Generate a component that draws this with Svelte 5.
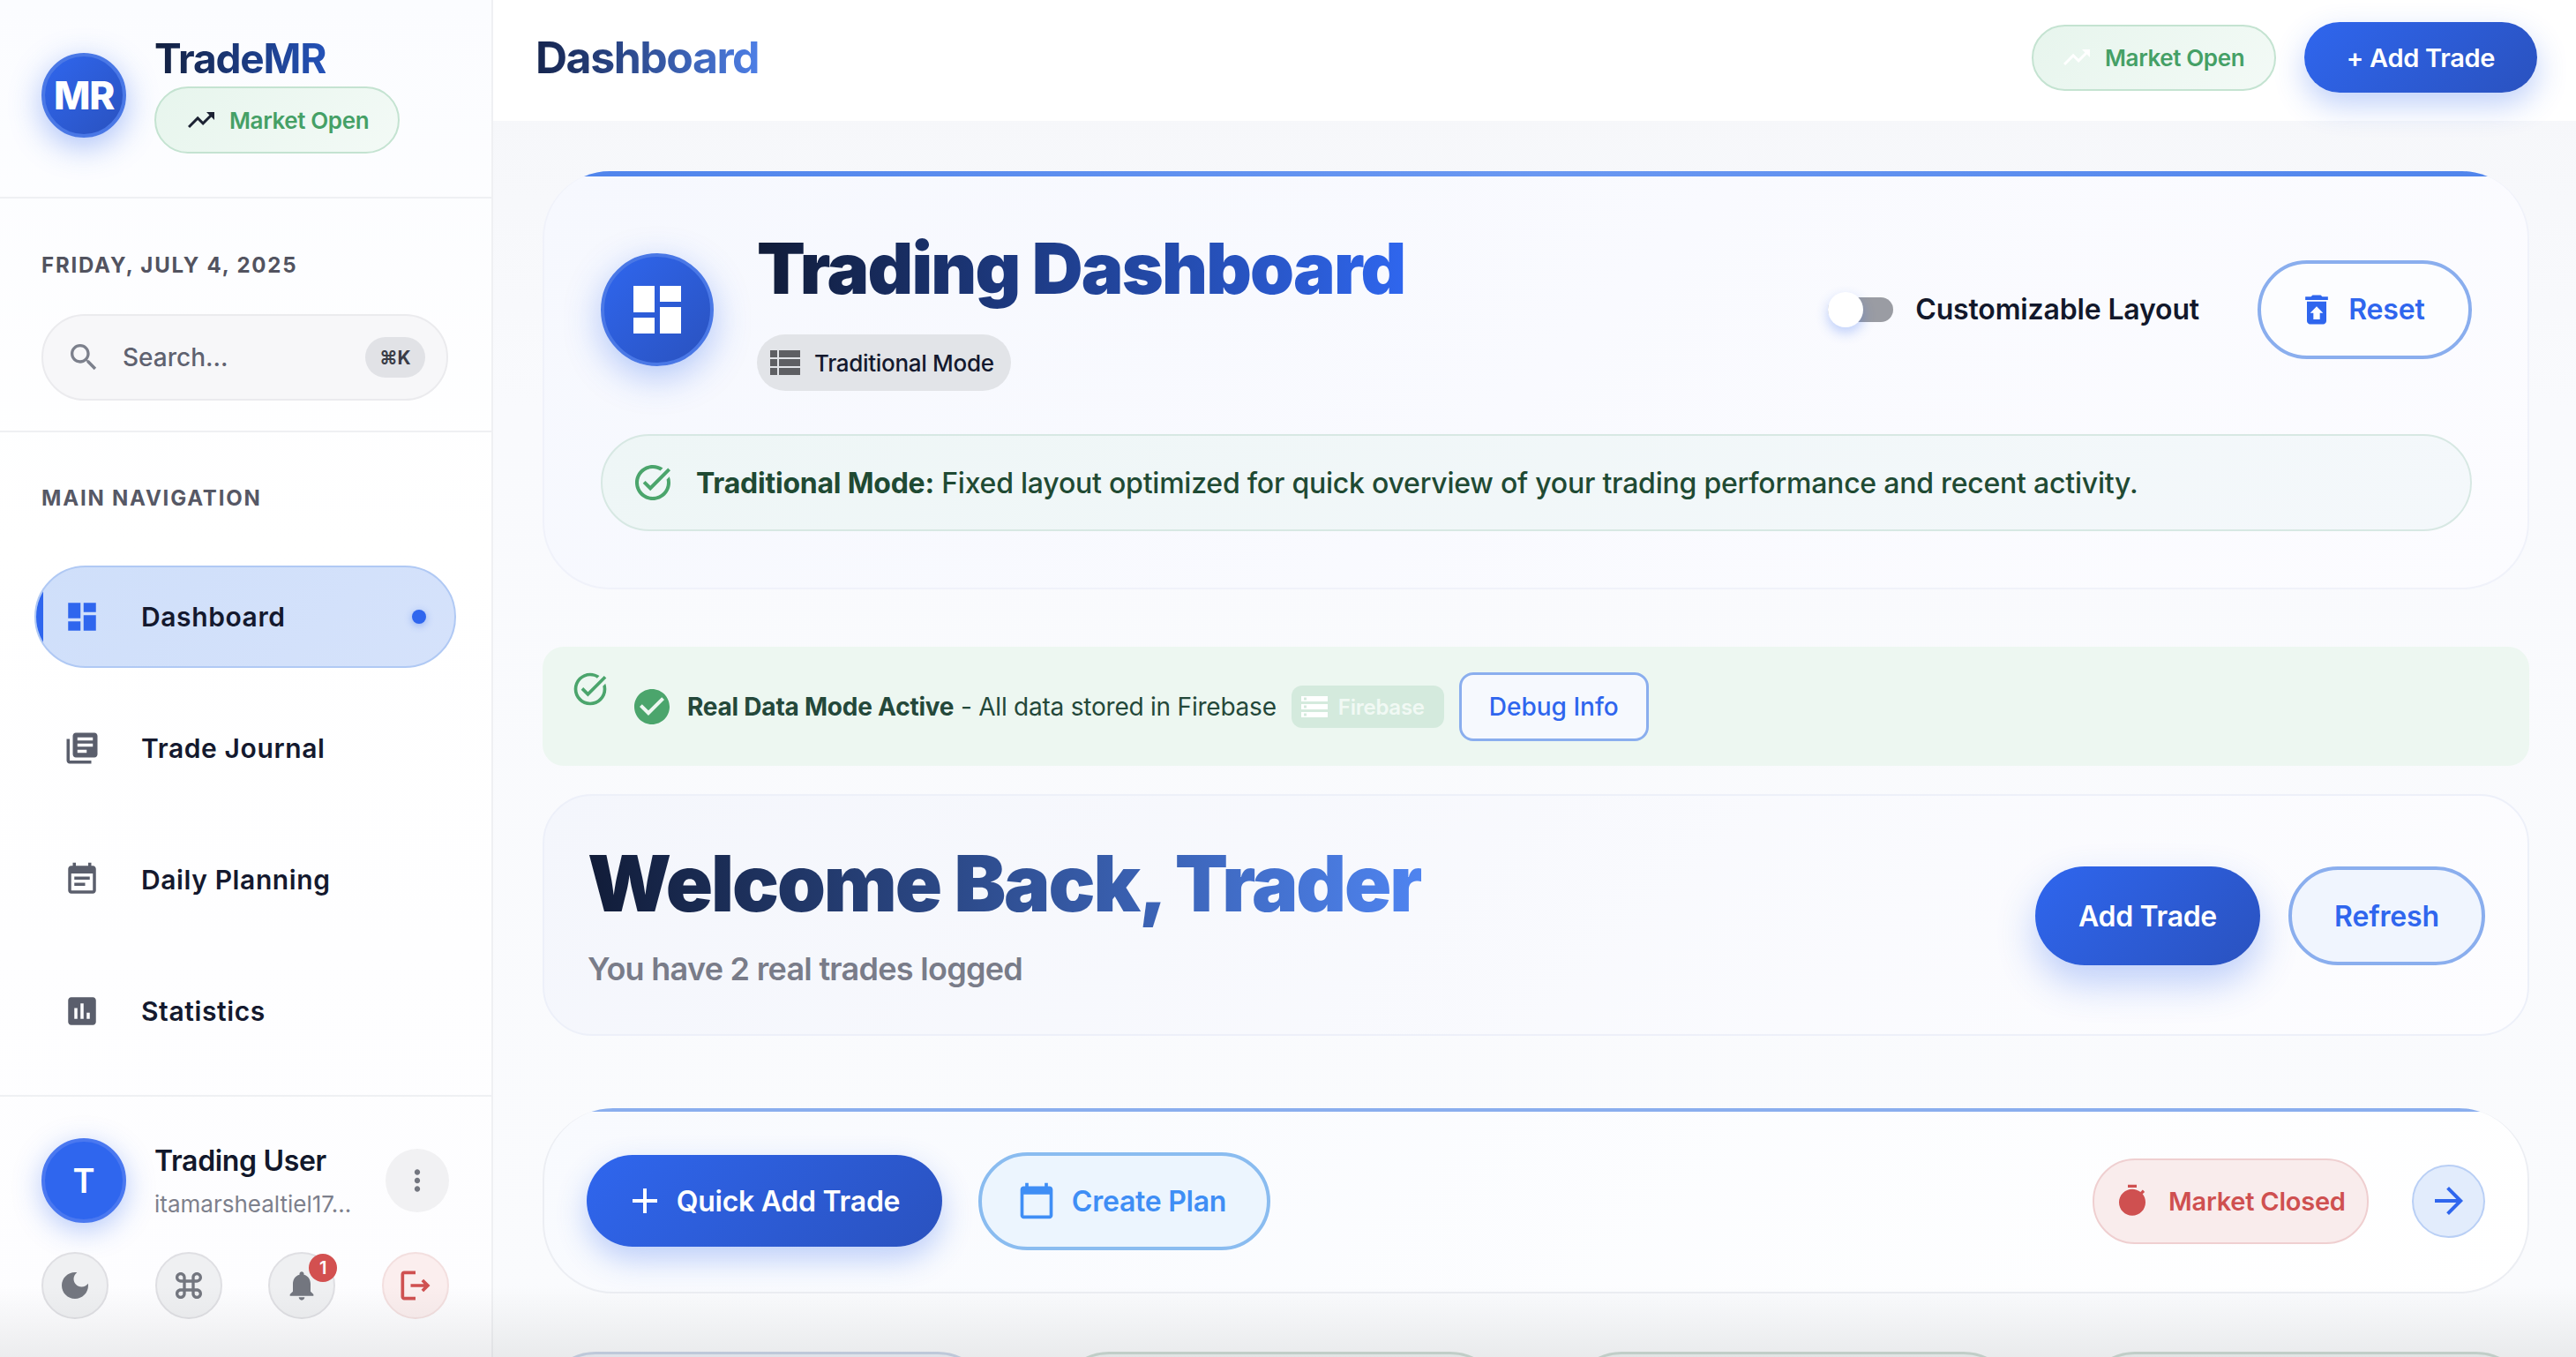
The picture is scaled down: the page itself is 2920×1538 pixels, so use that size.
<script>
  const icons = {
    dashboard: 'M3 13h8V3H3v10zm0 8h8v-6H3v6zm10 0h8V11h-8v10zm0-18v6h8V3h-8z',
    trending: 'M16 6l2.29 2.29-4.88 4.88-4-4L2 16.59 3.41 18l6-6 4 4 6.3-6.29L22 12V6z',
    search: 'M15.5 14h-.79l-.28-.27C15.41 12.59 16 11.11 16 9.5 16 5.91 13.09 3 9.5 3S3 5.91 3 9.5 5.91 16 9.5 16c1.61 0 3.09-.59 4.23-1.57l.27.28v.79l5 4.99L20.49 19l-4.99-5zm-6 0C7.01 14 5 11.99 5 9.5S7.01 5 9.5 5 14 7.01 14 9.5 11.99 14 9.5 14z',
    journal: 'M4 6H2v14c0 1.1.9 2 2 2h14v-2H4V6zm16-4H8c-1.1 0-2 .9-2 2v12c0 1.1.9 2 2 2h12c1.1 0 2-.9 2-2V4c0-1.1-.9-2-2-2zm-1 9H9V9h10v2zm-4 4H9v-2h6v2zm4-8H9V5h10v2z',
    planning: 'M17 10H7v2h10v-2zm2-7h-1V1h-2v2H8V1H6v2H5c-1.11 0-1.99.9-1.99 2L3 19c0 1.1.89 2 2 2h14c1.1 0 2-.9 2-2V5c0-1.1-.9-2-2-2zm0 16H5V8h14v11zm-5-5H7v2h7v-2z',
    stats: 'M19 3H5c-1.1 0-2 .9-2 2v14c0 1.1.9 2 2 2h14c1.1 0 2-.9 2-2V5c0-1.1-.9-2-2-2zM9 17H7v-7h2v7zm4 0h-2V7h2v10zm4 0h-2v-4h2v4z',
    more: 'M12 8c1.1 0 2-.9 2-2s-.9-2-2-2-2 .9-2 2 .9 2 2 2zm0 2c-1.1 0-2 .9-2 2s.9 2 2 2 2-.9 2-2-.9-2-2-2zm0 6c-1.1 0-2 .9-2 2s.9 2 2 2 2-.9 2-2-.9-2-2-2z',
    moon: 'M12 3c-4.97 0-9 4.03-9 9s4.03 9 9 9 9-4.03 9-9c0-.46-.04-.92-.1-1.36-.98 1.37-2.58 2.26-4.4 2.26-2.98 0-5.4-2.42-5.4-5.4 0-1.81.89-3.42 2.26-4.4-.44-.06-.9-.1-1.36-.1z',
    command: 'M17.5 3C15.57 3 14 4.57 14 6.5V8h-4V6.5C10 4.57 8.43 3 6.5 3S3 4.57 3 6.5 4.57 10 6.5 10H8v4H6.5C4.57 14 3 15.57 3 17.5S4.57 21 6.5 21s3.5-1.57 3.5-3.5V16h4v1.5c0 1.93 1.57 3.5 3.5 3.5s3.5-1.57 3.5-3.5-1.57-3.5-3.5-3.5H16v-4h1.5c1.93 0 3.5-1.57 3.5-3.5S19.43 3 17.5 3zM16 8V6.5c0-.83.67-1.5 1.5-1.5s1.5.67 1.5 1.5S18.33 8 17.5 8H16zM6.5 8C5.67 8 5 7.33 5 6.5S5.67 5 6.5 5 8 5.67 8 6.5V8H6.5zm3.5 6v-4h4v4h-4zm7.5 5c-.83 0-1.5-.67-1.5-1.5V16h1.5c.83 0 1.5.67 1.5 1.5s-.67 1.5-1.5 1.5zm-11 0c-.83 0-1.5-.67-1.5-1.5S5.67 16 6.5 16H8v1.5c0 .83-.67 1.5-1.5 1.5z',
    bell: 'M12 22c1.1 0 2-.9 2-2h-4c0 1.1.9 2 2 2zm6-6v-5c0-3.07-1.63-5.64-4.5-6.32V4c0-.83-.67-1.5-1.5-1.5s-1.5.67-1.5 1.5v.68C7.64 5.36 6 7.92 6 11v5l-2 2v1h16v-1l-2-2z',
    logout: 'M17 8l-1.41 1.41L17.17 11H9v2h8.17l-1.58 1.58L17 16l4-4-4-4zM5 5h7V3H5c-1.1 0-2 .9-2 2v14c0 1.1.9 2 2 2h7v-2H5V5z',
    list: 'M4 14h4v-4H4v4zm0 5h4v-4H4v4zM4 9h4V5H4v4zm5 5h12v-4H9v4zm0 5h12v-4H9v4zM9 5v4h12V5H9z',
    storage: 'M2 20h20v-4H2v4zm2-3h2v2H4v-2zM2 4v4h20V4H2zm4 3H4V5h2v2zm-4 7h20v-4H2v4zm2-3h2v2H4v-2z',
    restore: 'M19 4h-3.5l-1-1h-5l-1 1H5v2h14zM6 7v12c0 1.1.9 2 2 2h8c1.1 0 2-.9 2-2V7H6zm8 7v4h-4v-4H8l4-4 4 4h-2z',
    taskAlt: 'M22 5.18L10.59 16.6l-4.24-4.24 1.41-1.41 2.83 2.83 10-10L22 5.18zm-2.21 5.04c.13.57.21 1.17.21 1.78 0 4.42-3.58 8-8 8s-8-3.58-8-8 3.58-8 8-8c1.58 0 3.04.46 4.28 1.25l1.44-1.44C16.1 2.67 14.13 2 12 2 6.48 2 2 6.48 2 12s4.48 10 10 10 10-4.48 10-10c0-1.19-.22-2.33-.6-3.39l-1.61 1.61z',
    checkCircle: 'M12 2C6.48 2 2 6.48 2 12s4.48 10 10 10 10-4.48 10-10S17.52 2 12 2zm-2 15l-5-5 1.41-1.41L10 14.17l7.59-7.59L19 8l-9 9z',
    add: 'M19 13h-6v6h-2v-6H5v-2h6V5h2v6h6v2z',
    calendar: 'M20 3h-1V1h-2v2H7V1H5v2H4c-1.1 0-2 .9-2 2v16c0 1.1.9 2 2 2h16c1.1 0 2-.9 2-2V5c0-1.1-.9-2-2-2zm0 18H4V8h16v13z',
    timer: 'M15 1H9v2h6V1zm-4 13h2V8h-2v6zm8.03-6.61l1.42-1.42c-.43-.51-.9-.99-1.41-1.41l-1.42 1.42C16.07 4.74 14.12 4 12 4c-4.97 0-9 4.03-9 9s4.02 9 9 9 9-4.03 9-9c0-2.12-.74-4.07-1.97-5.61z',
    arrow: 'M12 4l-1.41 1.41L16.17 11H4v2h12.17l-5.58 5.59L12 20l8-8z'
  }

  const navItems = [
    { label: 'Dashboard', icon: 'dashboard', active: true },
    { label: 'Trade Journal', icon: 'journal' },
    { label: 'Daily Planning', icon: 'planning' },
    { label: 'Statistics', icon: 'stats' }
  ]
</script>

{#snippet icon(name, size, color)}
  <svg class="icon" viewBox="0 0 24 24" width={size} height={size} fill={color} aria-hidden="true"><path d={icons[name]} /></svg>
{/snippet}

<div class="app">
  <aside class="sidebar">
    <div class="brand">
      <div class="logo">MR</div>
      <div class="brand-text">
        <div class="brand-name">TradeMR</div>
        <div class="market-pill">
          {@render icon('trending', 36, '#1c2233')}
          <span>Market Open</span>
        </div>
      </div>
    </div>

    <div class="search-section">
      <div class="date">FRIDAY, JULY 4, 2025</div>
      <div class="search">
        {@render icon('search', 40, '#7c808c')}
        <span class="search-text">Search...</span>
        <span class="kbd">⌘K</span>
      </div>
    </div>

    <nav class="nav">
      <div class="nav-label">MAIN NAVIGATION</div>
      <ul class="nav-list">
        {#each navItems as item (item.label)}
          <li class="nav-item" class:active={item.active}>
            {@render icon(item.icon, 42, item.active ? '#2f66ee' : '#5a5e6c')}
            <span class="nav-text">{item.label}</span>
            {#if item.active}<span class="nav-dot"></span>{/if}
          </li>
        {/each}
      </ul>
    </nav>

    <div class="user-section">
      <div class="user-row">
        <div class="avatar">T</div>
        <div class="user-info">
          <div class="user-name">Trading User</div>
          <div class="user-mail">itamarshealtiel17...</div>
        </div>
        <button class="more-btn">{@render icon('more', 38, '#73767f')}</button>
      </div>
      <div class="action-row">
        <button class="round-btn">{@render icon('moon', 40, '#73767f')}</button>
        <button class="round-btn">{@render icon('command', 40, '#73767f')}</button>
        <button class="round-btn">
          {@render icon('bell', 40, '#73767f')}
          <span class="badge">1</span>
        </button>
        <button class="round-btn danger">{@render icon('logout', 44, '#cf5050')}</button>
      </div>
    </div>
  </aside>

  <main class="main">
    <header class="topbar">
      <h1 class="page-title">Dashboard</h1>
      <div class="topbar-actions">
        <div class="market-pill market-pill--top">
          {@render icon('trending', 36, '#ffffff')}
          <span>Market Open</span>
        </div>
        <button class="btn-primary btn-top">+ Add Trade</button>
      </div>
    </header>

    <div class="content">
      <section class="hero">
        <div class="hero-head">
          <div class="hero-icon">{@render icon('dashboard', 72, '#ffffff')}</div>
          <div class="hero-titles">
            <h2 class="hero-title">Trading Dashboard</h2>
            <div class="mode-pill">
              {@render icon('list', 48, '#5e5f63')}
              <span>Traditional Mode</span>
            </div>
          </div>
          <div class="hero-controls">
            <div class="toggle"><span class="toggle-thumb"></span></div>
            <span class="toggle-label">Customizable Layout</span>
            <button class="btn-outline btn-reset">
              {@render icon('restore', 44, '#2f66ee')}
              <span>Reset</span>
            </button>
          </div>
        </div>
        <div class="mode-info">
          {@render icon('taskAlt', 48, '#4ba56c')}
          <p><strong>Traditional Mode:</strong> Fixed layout optimized for quick overview of your trading performance and recent activity.</p>
        </div>
      </section>

      <section class="data-banner">
        {@render icon('taskAlt', 44, '#4ba56c')}
        <div class="data-row">
          {@render icon('checkCircle', 48, '#4ba56c')}
          <span class="data-text"><strong>Real Data Mode Active</strong> - All data stored in Firebase</span>
          <span class="fb-chip">
            {@render icon('storage', 36, '#ffffff')}
            <span>Firebase</span>
          </span>
          <button class="debug-btn">Debug Info</button>
        </div>
      </section>

      <section class="welcome">
        <div>
          <h2 class="welcome-title">Welcome Back, Trader</h2>
          <p class="welcome-sub">You have 2 real trades logged</p>
        </div>
        <div class="welcome-actions">
          <button class="btn-primary btn-large">Add Trade</button>
          <button class="btn-outline btn-refresh">Refresh</button>
        </div>
      </section>

      <section class="quick">
        <div class="quick-left">
          <button class="btn-primary btn-quick">
            {@render icon('add', 48, '#ffffff')}
            <span>Quick Add Trade</span>
          </button>
          <button class="btn-plan">
            {@render icon('calendar', 44, '#3f8ef5')}
            <span>Create Plan</span>
          </button>
        </div>
        <div class="quick-right">
          <div class="closed-pill">
            {@render icon('timer', 40, '#cf5050')}
            <span>Market Closed</span>
          </div>
          <button class="arrow-btn">{@render icon('arrow', 48, '#2f66ee')}</button>
        </div>
      </section>

      <div class="stat-row">
        <div class="stat-card stat-card--blue"></div>
        <div class="stat-card"></div>
        <div class="stat-card"></div>
        <div class="stat-card"></div>
      </div>
    </div>
  </main>

  <div class="bottom-fade"></div>
</div>

<style>
  :global(body) {
    margin: 0;
    overflow: hidden;
  }

  * {
    box-sizing: border-box;
  }

  h1, h2, p, ul {
    margin: 0;
    padding: 0;
  }

  button {
    font-family: inherit;
    cursor: pointer;
  }

  .icon {
    flex-shrink: 0;
    display: block;
  }

  .app {
    position: relative;
    display: flex;
    width: 2920px;
    height: 1538px;
    overflow: hidden;
    font-family: Inter, "Noto Sans", sans-serif;
    color: #12182b;
  }

  /* -- Sidebar -- */
  .sidebar {
    width: 559px;
    flex-shrink: 0;
    display: flex;
    flex-direction: column;
    background: linear-gradient(180deg, #fbfcff 0%, #ffffff 40%, #fdfdff 100%);
    border-right: 2px solid #eff0f3;
  }

  .brand {
    height: 225px;
    padding: 40px 0 0 47px;
    display: flex;
    align-items: flex-start;
    gap: 32px;
    border-bottom: 2px solid #eff0f3;
  }

  .logo {
    width: 96px;
    height: 96px;
    margin-top: 20px;
    border-radius: 50%;
    display: flex;
    align-items: center;
    justify-content: center;
    background: linear-gradient(135deg, #2f66ee, #2a52bf);
    border: 4px solid #4a78e6;
    box-shadow: 0 10px 36px rgba(47, 102, 238, 0.4);
    color: #fff;
    font-size: 44px;
    font-weight: 800;
    letter-spacing: -0.03em;
    flex-shrink: 0;
  }

  .brand-name {
    font-size: 46px;
    line-height: 52px;
    font-weight: 700;
    letter-spacing: -0.025em;
    margin-bottom: 6px;
    width: fit-content;
    background: linear-gradient(90deg, #13203f, #2452b8);
    -webkit-background-clip: text;
    background-clip: text;
    color: transparent;
  }

  .market-pill {
    width: 278px;
    height: 76px;
    display: flex;
    align-items: center;
    gap: 14px;
    padding-left: 33px;
    border-radius: 38px;
    border: 2px solid #c4e3d1;
    background: linear-gradient(135deg, #e7f5ed, #f3faf6);
    color: #45a066;
    font-size: 26px;
    font-weight: 600;
    letter-spacing: -0.015em;
  }

  .search-section {
    padding: 61px 49px 34px 47px;
    border-bottom: 2px solid #eff0f3;
  }

  .date {
    font-size: 24px;
    line-height: 30px;
    font-weight: 700;
    letter-spacing: 0.075em;
    color: #52535f;
    margin-bottom: 40px;
  }

  .search {
    height: 98px;
    display: flex;
    align-items: center;
    padding: 0 24px 0 26px;
    border-radius: 49px;
    border: 2px solid #ebebee;
    background: #f7f7f9;
  }

  .search-text {
    margin-left: 24px;
    flex: 1;
    font-size: 28px;
    font-weight: 500;
    color: #5f6270;
  }

  .kbd {
    width: 68px;
    height: 46px;
    border-radius: 23px;
    background: #e1e2e6;
    display: flex;
    align-items: center;
    justify-content: center;
    font-size: 21px;
    font-weight: 700;
    color: #3a3c47;
  }

  .nav {
    padding: 60px 40px 0 39px;
  }

  .nav-label {
    padding-left: 8px;
    font-size: 24px;
    line-height: 30px;
    font-weight: 700;
    letter-spacing: 0.075em;
    color: #565865;
    margin-bottom: 61px;
    white-space: nowrap;
  }

  .nav-list {
    list-style: none;
    display: flex;
    flex-direction: column;
    gap: 33px;
  }

  .nav-item {
    position: relative;
    height: 116px;
    display: flex;
    align-items: center;
    gap: 46px;
    padding: 0 32px 0 31px;
    border-radius: 58px;
    border: 2px solid transparent;
    overflow: hidden;
    font-size: 30px;
    font-weight: 600;
    letter-spacing: 0.02em;
    color: #14192e;
  }

  .nav-item.active {
    background: linear-gradient(135deg, #cfdffa, #d5e2fb);
    border-color: #b0c9f4;
  }

  .nav-item.active::before {
    content: '';
    position: absolute;
    left: 0;
    top: 0;
    bottom: 0;
    width: 8px;
    background: #2f66ee;
  }

  .nav-text {
    flex: 1;
  }

  .nav-dot {
    width: 16px;
    height: 16px;
    border-radius: 50%;
    background: #2f66ee;
    box-shadow: 0 2px 8px rgba(47, 102, 238, 0.4);
  }

  .user-section {
    margin-top: auto;
    height: 297px;
    padding: 47px 48px 0 47px;
    border-top: 2px solid #eff0f3;
  }

  .user-row {
    display: flex;
    align-items: center;
  }

  .avatar {
    width: 96px;
    height: 96px;
    border-radius: 50%;
    display: flex;
    align-items: center;
    justify-content: center;
    background: #2f66ee;
    border: 4px solid #4a78f0;
    box-shadow: 0 8px 32px rgba(47, 102, 238, 0.35);
    color: #fff;
    font-size: 38px;
    font-weight: 600;
    flex-shrink: 0;
  }

  .user-info {
    margin-left: 32px;
    padding-top: 4px;
    flex: 1;
    white-space: nowrap;
  }

  .user-name {
    font-size: 32px;
    line-height: 38px;
    font-weight: 600;
    letter-spacing: -0.01em;
    color: #12182b;
    margin-bottom: 12px;
  }

  .user-mail {
    font-size: 26px;
    line-height: 36px;
    color: #7d808c;
  }

  .more-btn {
    width: 72px;
    height: 72px;
    border: none;
    border-radius: 50%;
    background: #f1f1f3;
    display: flex;
    align-items: center;
    justify-content: center;
    padding: 0;
  }

  .action-row {
    margin-top: 33px;
    display: flex;
    justify-content: space-between;
  }

  .round-btn {
    position: relative;
    width: 76px;
    height: 76px;
    border-radius: 50%;
    border: 2px solid #dfdfe3;
    background: #eff0f2;
    display: flex;
    align-items: center;
    justify-content: center;
    padding: 0;
  }

  .round-btn.danger {
    background: #fbeeee;
    border-color: #f3dfdf;
  }

  .badge {
    position: absolute;
    top: 0;
    right: -4px;
    width: 32px;
    height: 32px;
    border-radius: 50%;
    background: #d35050;
    color: #fff;
    font-size: 20px;
    font-weight: 600;
    display: flex;
    align-items: center;
    justify-content: center;
  }

  /* -- Main -- */
  .main {
    flex: 1;
    min-width: 0;
    display: flex;
    flex-direction: column;
    background: linear-gradient(180deg, #f5f6f9 0%, #f9fafd 30%, #fafbfd 100%);
  }

  .topbar {
    height: 137px;
    flex-shrink: 0;
    padding: 0 44px 7px 48px;
    display: flex;
    align-items: center;
    justify-content: space-between;
    background: #fff;
  }

  .page-title {
    font-size: 50px;
    font-weight: 700;
    letter-spacing: -0.03em;
    background: linear-gradient(90deg, #15244d, #4e7fe6);
    -webkit-background-clip: text;
    background-clip: text;
    color: transparent;
  }

  .topbar-actions {
    display: flex;
    align-items: center;
    gap: 32px;
  }

  .market-pill--top {
    width: 277px;
    height: 75px;
    padding-left: 31px;
  }

  .btn-primary {
    border: none;
    color: #fff;
    font-weight: 600;
    background: linear-gradient(135deg, #2f66ee, #2a52bf);
    box-shadow: 0 14px 34px rgba(47, 102, 238, 0.3);
  }

  .btn-top {
    width: 264px;
    height: 80px;
    border-radius: 40px;
    font-size: 29px;
    letter-spacing: -0.01em;
  }

  .content {
    flex: 1;
    padding: 57px 53px 0 56px;
    display: flex;
    flex-direction: column;
  }

  .hero {
    position: relative;
    height: 474px;
    flex-shrink: 0;
    padding: 64px 63px 0 64px;
    border: 2px solid #f0f2fa;
    border-top: none;
    border-radius: 76px;
    overflow: hidden;
    background: linear-gradient(135deg, #f6f8fe, #fcfcff);
  }

  .hero::before {
    content: '';
    position: absolute;
    left: 0;
    right: 0;
    top: 0;
    height: 6px;
    background: linear-gradient(90deg, #4f84ec, #6a98f2 50%, #4f84ec);
  }

  .hero-head {
    display: flex;
    align-items: center;
    gap: 49px;
  }

  .hero-icon {
    width: 128px;
    height: 128px;
    border-radius: 50%;
    display: flex;
    align-items: center;
    justify-content: center;
    background: linear-gradient(135deg, #2f66ee, #2a52bf);
    border: 4px solid #4a78e6;
    box-shadow: 0 12px 40px rgba(47, 102, 238, 0.35);
    flex-shrink: 0;
  }

  .hero-title {
    font-size: 80px;
    line-height: 92px;
    font-weight: 900;
    letter-spacing: -0.022em;
    margin-bottom: 29px;
    white-space: nowrap;
    background: linear-gradient(90deg, #111c38, #2f66ee);
    -webkit-background-clip: text;
    background-clip: text;
    color: transparent;
  }

  .mode-pill {
    width: 288px;
    height: 64px;
    padding-left: 7px;
    border-radius: 32px;
    background: #e2e4e8;
    display: flex;
    align-items: center;
    gap: 10px;
    font-size: 26px;
    font-weight: 500;
    letter-spacing: -0.012em;
    color: #14192e;
    white-space: nowrap;
  }

  .hero-controls {
    margin-left: auto;
    display: flex;
    align-items: center;
  }

  .toggle {
    position: relative;
    width: 74px;
    height: 28px;
    border-radius: 14px;
    background: #9a9ca3;
  }

  .toggle-thumb {
    position: absolute;
    left: 0;
    top: -6px;
    width: 40px;
    height: 40px;
    border-radius: 50%;
    background: #fff;
    box-shadow: 0 6px 14px rgba(47, 102, 238, 0.3);
  }

  .toggle-label {
    margin-left: 25px;
    font-size: 32px;
    font-weight: 600;
    letter-spacing: -0.005em;
    color: #12182b;
    white-space: nowrap;
  }

  .btn-outline {
    border: 4px solid #8aaeee;
    color: #2f66ee;
    font-weight: 600;
    background: transparent;
  }

  .btn-reset {
    margin-left: 66px;
    width: 243px;
    height: 112px;
    border-radius: 56px;
    font-size: 32px;
    letter-spacing: -0.005em;
    display: flex;
    align-items: center;
    justify-content: center;
    gap: 14px;
    padding: 0 8px 0 0;
    background: #fcfdff;
  }

  .mode-info {
    margin-top: 49px;
    height: 110px;
    padding: 0 0 0 33px;
    display: flex;
    align-items: center;
    gap: 25px;
    border: 2px solid #d7e8e3;
    border-radius: 55px;
    background: linear-gradient(135deg, #eef6f6, #f4f8fb);
    font-size: 32px;
    letter-spacing: -0.007em;
    color: #1f4a33;
    font-weight: 500;
    white-space: nowrap;
  }

  .mode-info strong {
    font-weight: 700;
  }

  .data-banner {
    margin-top: 65px;
    height: 135px;
    flex-shrink: 0;
    padding: 26px 0 0 32px;
    border-radius: 24px;
    background: #edf7f1;
    display: flex;
    align-items: flex-start;
    gap: 24px;
  }

  .data-row {
    margin-top: 3px;
    height: 78px;
    display: flex;
    align-items: center;
    gap: 17px;
  }

  .data-text {
    margin-left: -1px;
    font-size: 28px;
    letter-spacing: -0.008em;
    color: #24483a;
    white-space: nowrap;
  }

  .data-text strong {
    font-weight: 700;
  }

  .fb-chip {
    width: 173px;
    height: 48px;
    border-radius: 12px;
    background: #d4eadd;
    padding-left: 8px;
    display: flex;
    align-items: center;
    gap: 9px;
    color: #f1f9f4;
    font-size: 24px;
    font-weight: 600;
    letter-spacing: -0.01em;
    white-space: nowrap;
  }

  .debug-btn {
    width: 215px;
    height: 78px;
    border-radius: 16px;
    border: 3px solid #8aaeee;
    background: #f6f9fe;
    color: #2f66ee;
    font-size: 28px;
    font-weight: 500;
  }

  .welcome {
    margin-top: 32px;
    height: 274px;
    flex-shrink: 0;
    padding: 0 48px 6px 49px;
    display: flex;
    align-items: center;
    justify-content: space-between;
    border: 2px solid #edf0f9;
    border-radius: 56px;
    background: linear-gradient(135deg, #f4f6fc, #fdfdff);
  }

  .welcome-title {
    font-size: 88px;
    line-height: 104px;
    font-weight: 900;
    letter-spacing: -0.024em;
    white-space: nowrap;
    width: fit-content;
    background: linear-gradient(90deg, #111c38, #4f84f0);
    -webkit-background-clip: text;
    background-clip: text;
    color: transparent;
  }

  .welcome-sub {
    margin-top: 23px;
    font-size: 36px;
    line-height: 44px;
    font-weight: 600;
    letter-spacing: -0.02em;
    color: #797c89;
  }

  .welcome-actions {
    display: flex;
    align-items: center;
    gap: 32px;
    margin-top: 8px;
  }

  .btn-large {
    width: 255px;
    height: 112px;
    border-radius: 56px;
    font-size: 32px;
    letter-spacing: -0.01em;
    box-shadow: 0 20px 44px rgba(47, 102, 238, 0.3);
  }

  .btn-refresh {
    width: 223px;
    height: 112px;
    border-radius: 56px;
    font-size: 32px;
    letter-spacing: -0.005em;
    background: #f0f5fe;
  }

  .quick {
    position: relative;
    margin-top: 82px;
    height: 210px;
    flex-shrink: 0;
    padding: 2px 48px 0;
    display: flex;
    align-items: center;
    justify-content: space-between;
    border: 2px solid #eceef3;
    border-top: none;
    border-radius: 80px;
    overflow: hidden;
    background: linear-gradient(135deg, #f8fafe, #ffffff);
  }

  .quick::before {
    content: '';
    position: absolute;
    left: 0;
    right: 0;
    top: 0;
    height: 4px;
    background: #8aaeee;
  }

  .quick-left,
  .quick-right {
    display: flex;
    align-items: center;
  }

  .quick-left {
    gap: 41px;
  }

  .quick-right {
    gap: 49px;
  }

  .btn-quick {
    width: 403px;
    height: 104px;
    border-radius: 52px;
    font-size: 32px;
    letter-spacing: -0.008em;
    display: flex;
    align-items: center;
    justify-content: center;
    gap: 12px;
    padding: 0 6px 0 0;
    box-shadow: 0 14px 34px rgba(47, 102, 238, 0.3);
  }

  .btn-plan {
    width: 331px;
    height: 111px;
    border-radius: 56px;
    border: 4px solid #8abcf0;
    background: #ecf5fe;
    color: #3f8ef5;
    font-size: 32px;
    font-weight: 600;
    letter-spacing: -0.008em;
    display: flex;
    align-items: center;
    justify-content: center;
    gap: 18px;
    padding: 0 6px 0 0;
  }

  .closed-pill {
    width: 313px;
    height: 97px;
    border-radius: 48px;
    border: 2px solid #efcfd0;
    background: #f9ecec;
    padding-left: 23px;
    display: flex;
    align-items: center;
    gap: 21px;
    color: #cf5050;
    font-size: 29px;
    font-weight: 600;
    letter-spacing: -0.008em;
    white-space: nowrap;
  }

  .arrow-btn {
    width: 83px;
    height: 83px;
    border-radius: 50%;
    border: 2px solid #b9cff5;
    background: #e2ecfc;
    display: flex;
    align-items: center;
    justify-content: center;
    padding: 0;
  }

  .stat-row {
    margin-top: 66px;
    display: grid;
    grid-template-columns: repeat(4, 1fr);
    gap: 74px;
  }

  .stat-card {
    height: 120px;
    border: 3px solid #cbd9d2;
    border-radius: 68px;
    background: #f0f4f4;
  }

  .stat-card--blue {
    border-color: #c8d3e6;
    background: #eef2f9;
  }

  .bottom-fade {
    position: absolute;
    left: 0;
    right: 0;
    bottom: 0;
    height: 80px;
    pointer-events: none;
    background: linear-gradient(180deg, rgba(120, 125, 125, 0), rgba(120, 125, 125, 0.13));
  }
</style>
